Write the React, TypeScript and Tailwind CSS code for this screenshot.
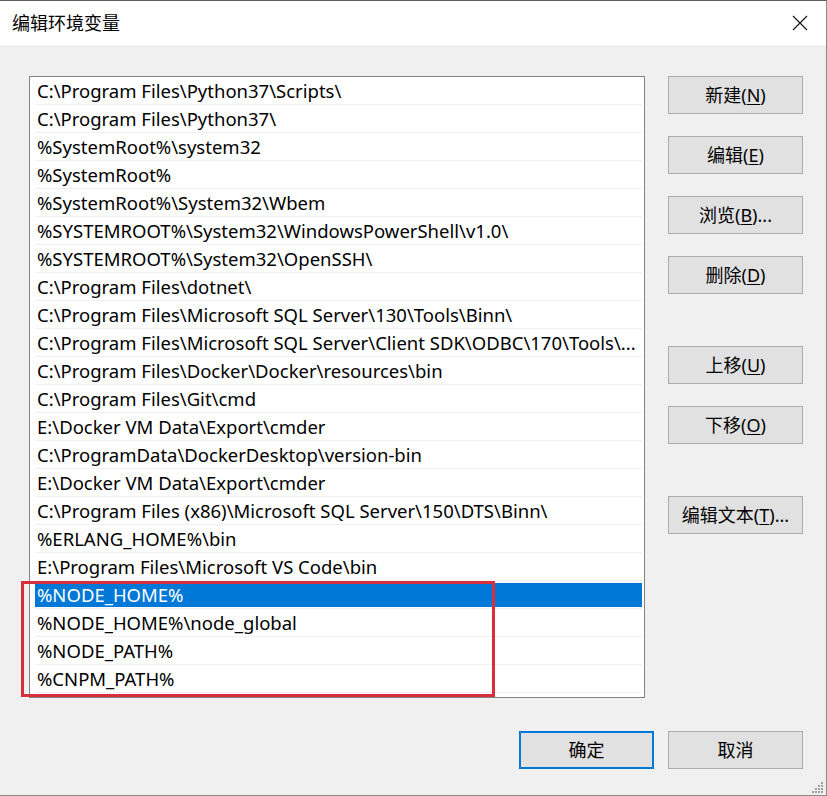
const font = {
  fontFamily: '"Segoe UI", "Noto Sans", "Noto Sans CJK SC", sans-serif',
};

const paths = [
  "C:\\Program Files\\Python37\\Scripts\\",
  "C:\\Program Files\\Python37\\",
  "%SystemRoot%\\system32",
  "%SystemRoot%",
  "%SystemRoot%\\System32\\Wbem",
  "%SYSTEMROOT%\\System32\\WindowsPowerShell\\v1.0\\",
  "%SYSTEMROOT%\\System32\\OpenSSH\\",
  "C:\\Program Files\\dotnet\\",
  "C:\\Program Files\\Microsoft SQL Server\\130\\Tools\\Binn\\",
  "C:\\Program Files\\Microsoft SQL Server\\Client SDK\\ODBC\\170\\Tools\\...",
  "C:\\Program Files\\Docker\\Docker\\resources\\bin",
  "C:\\Program Files\\Git\\cmd",
  "E:\\Docker VM Data\\Export\\cmder",
  "C:\\ProgramData\\DockerDesktop\\version-bin",
  "E:\\Docker VM Data\\Export\\cmder",
  "C:\\Program Files (x86)\\Microsoft SQL Server\\150\\DTS\\Binn\\",
  "%ERLANG_HOME%\\bin",
  "E:\\Program Files\\Microsoft VS Code\\bin",
  "%NODE_HOME%",
  "%NODE_HOME%\\node_global",
  "%NODE_PATH%",
  "%CNPM_PATH%",
];

const SELECTED = 18;

type BtnProps = {
  label: string;
  hotkey?: string;
  suffix?: string;
  primary?: boolean;
  className?: string;
};

const Btn = ({ label, hotkey, suffix, primary, className }: BtnProps) => (
  <button
    className={`flex h-[38px] w-[135px] items-center justify-center bg-[#e1e1e1] text-[18px] text-black ${
      primary ? "border-2 border-[#0078d7]" : "border border-[#adadad]"
    } ${className ?? ""}`}
  >
    {label}
    {hotkey && (
      <>
        (<span className="underline underline-offset-2">{hotkey}</span>)
      </>
    )}
    {suffix}
  </button>
);

export default function App() {
  return (
    <div
      className="relative flex h-[796px] w-[827px] flex-col overflow-hidden border-t border-r border-b border-t-[#5f5f5f] border-r-[#8a8a8a] border-b-[#8a8a8a] bg-[#f0f0f0]"
      style={font}
    >
      {/* title bar */}
      <div className="flex h-[44px] shrink-0 items-center justify-between bg-white pl-[12px] pr-[18px]">
        <span className="text-[18px] text-black">编辑环境变量</span>
        <svg width="16" height="16" viewBox="0 0 16 16">
          <path d="M1 1 L15 15 M15 1 L1 15" stroke="#111" strokeWidth="1.1" />
        </svg>
      </div>

      <div className="flex pl-[29px] pt-[31px]">
        {/* list */}
        <div className="h-[622px] w-[616px] border border-[#828282] bg-white pl-[5px] pr-[2px]">
          {paths.map((p, i) => (
            <div
              key={i}
              className="h-[28px] border-b border-[#f0f0f0] pt-[2px] pb-[1px]"
            >
              <div
                className={`flex h-full items-center whitespace-nowrap pl-[2px] text-[18.5px] ${
                  i === SELECTED ? "bg-[#0078d7] text-white" : "text-black"
                }`}
              >
                {p}
              </div>
            </div>
          ))}
        </div>

        {/* side buttons */}
        <div className="ml-[23px] flex flex-col">
          <Btn label="新建" hotkey="N" />
          <Btn label="编辑" hotkey="E" className="mt-[22px]" />
          <Btn label="浏览" hotkey="B" suffix="..." className="mt-[22px]" />
          <Btn label="删除" hotkey="D" className="mt-[22px]" />
          <Btn label="上移" hotkey="U" className="mt-[52px]" />
          <Btn label="下移" hotkey="O" className="mt-[22px]" />
          <Btn label="编辑文本" hotkey="T" suffix="..." className="mt-[52px]" />
        </div>
      </div>

      {/* bottom buttons */}
      <div className="flex justify-end gap-[14px] pr-[23px] pt-[33px]">
        <Btn label="确定" primary />
        <Btn label="取消" />
      </div>

      {/* red highlight frame */}
      <div className="pointer-events-none absolute left-[21px] top-[580px] h-[116px] w-[474px] border-[3px] border-[#d7303c]" />

      {/* resize grip */}
      <svg
        className="absolute bottom-[2px] right-[2px]"
        width="12"
        height="12"
        viewBox="0 0 12 12"
      >
        {[
          [9, 1],
          [6, 4],
          [9, 4],
          [3, 7],
          [6, 7],
          [9, 7],
          [0, 10],
          [3, 10],
          [6, 10],
          [9, 10],
        ].map(([x, y], i) => (
          <rect key={i} x={x} y={y} width="2" height="2" fill="#a0a0a0" />
        ))}
      </svg>
    </div>
  );
}
